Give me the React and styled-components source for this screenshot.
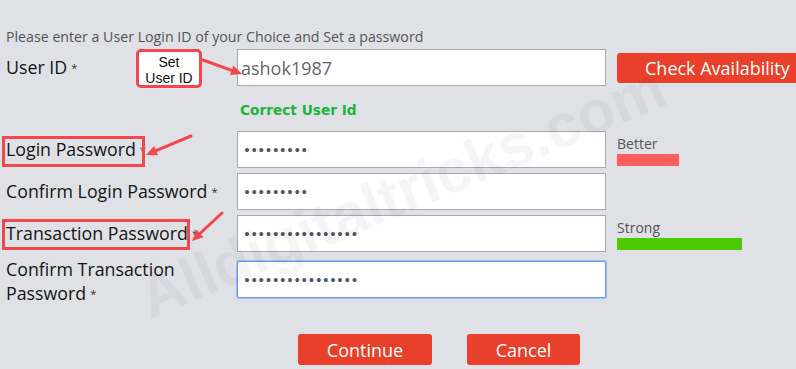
import React from "react";
import styled, { createGlobalStyle } from "styled-components";

const Global = createGlobalStyle`
  html, body { margin: 0; padding: 0; background: #dfe1e6; }
  body { font-family: "Open Sans", "Noto Sans", sans-serif; overflow: hidden; }
`;

const Page = styled.div`
  position: relative;
  width: 796px;
  height: 369px;
  overflow: hidden;
  background: #dfe1e6;
  color: #111;
`;

const Form = styled.div`
  padding: 28px 0 0 6px;
  display: flex;
  flex-direction: column;
`;

const Intro = styled.div`
  font-size: 14.2px;
  line-height: 18px;
  color: #555;
  margin-bottom: 3px;
  white-space: nowrap;
`;

const Row = styled.div`
  display: grid;
  grid-template-columns: 231px 369px 1fr;
  grid-template-rows: 37px;
  align-items: center;
  height: 37px;
  margin-top: ${(p) => p.$gap || 0}px;
`;

const Label = styled.div`
  font-size: 17.8px;
  line-height: 24px;
  color: #151515;
  white-space: nowrap;
  padding-top: ${(p) => (p.$two ? 3 : 0)}px;
`;

const Star = styled.span`
  font-size: 11px;
  color: #333;
  margin-left: 4px;
  vertical-align: 2px;
`;

const Field = styled.input`
  box-sizing: border-box;
  width: 369px;
  height: 37px;
  margin: 0;
  padding: 0 3px;
  background: #fff;
  border: 1px solid ${(p) => (p.$focus ? "#6f9ae6" : "#a9a9a9")};
  box-shadow: ${(p) => (p.$focus ? "0 0 0 1px #9bbcf0" : "none")};
  border-radius: ${(p) => (p.$focus ? "2px" : "0")};
  outline: none;
  font-family: "Open Sans", sans-serif;
  font-size: 18px;
  color: #666;
  &[type="password"] {
    font-family: "DejaVu Sans", sans-serif;
    font-size: 13.5px;
    letter-spacing: -0.8px;
    color: #505560;
    padding-left: 5px;
  }
`;

const Side = styled.div`
  align-self: ${(p) => (p.$top ? "start" : "center")};
  padding-left: 11px;
  padding-top: ${(p) => (p.$top ? 5 : 0)}px;
  display: flex;
  flex-direction: column;
  align-items: flex-start;
`;

const Strength = styled.div`
  font-size: 14px;
  line-height: 16px;
  color: #555;
`;

const Bar = styled.div`
  height: 12px;
  margin-top: 2px;
  width: ${(p) => p.$w}px;
  background: ${(p) => p.$color};
`;

const RedButton = styled.button`
  box-sizing: border-box;
  height: ${(p) => p.$h || 31}px;
  width: ${(p) => p.$w}px;
  padding: ${(p) => (p.$left ? "0 0 0 28px" : "0")};
  text-align: ${(p) => (p.$left ? "left" : "center")};
  background: #e8402b;
  color: #fff;
  border: none;
  border-radius: 3px;
  font-family: "Open Sans", sans-serif;
  font-size: 18px;
  white-space: nowrap;
  flex: none;
`;

const MessageRow = styled.div`
  display: grid;
  grid-template-columns: 231px 1fr;
  height: 45px;
`;

const Valid = styled.div`
  grid-column: 2;
  padding: 15px 0 0 3px;
  font-family: "DejaVu Sans", sans-serif;
  font-size: 13.7px;
  line-height: 18px;
  font-weight: 700;
  color: #1cb53a;
`;

const Buttons = styled.div`
  display: flex;
  gap: 35px;
  margin-top: 36px;
  padding-left: 292px;
`;

const SetBox = styled.div`
  position: absolute;
  left: 136px;
  top: 49px;
  width: 66px;
  height: 39px;
  box-sizing: border-box;
  border: 3px solid #f2474c;
  border-radius: 5px;
  background: #fff;
  font-family: "Liberation Sans", Arial, sans-serif;
  font-size: 14px;
  line-height: 16px;
  color: #111;
  text-align: center;
  padding-top: 2px;
`;

const Highlight = styled.div`
  position: absolute;
  left: ${(p) => p.$x}px;
  top: ${(p) => p.$y}px;
  width: ${(p) => p.$w}px;
  height: 31px;
  box-sizing: border-box;
  border: 3px solid #f2474c;
  pointer-events: none;
`;

const Arrows = styled.svg`
  position: absolute;
  left: 0;
  top: 0;
  pointer-events: none;
`;

const Watermark = styled.div`
  position: absolute;
  left: 402px;
  top: 192px;
  transform: translate(-50%, -50%) rotate(-22.5deg);
  font-family: "Liberation Sans", Arial, sans-serif;
  font-weight: 700;
  font-size: 61px;
  color: rgba(0, 0, 0, 0.04);
  white-space: nowrap;
  pointer-events: none;
`;

const Arrow = ({ x1, y1, bx, by, head }) => (
  <g>
    <line x1={x1} y1={y1} x2={bx} y2={by} stroke="#f2474c" strokeWidth="3" strokeLinecap="round" />
    <polygon points={head} fill="#f2474c" />
  </g>
);

export default function App() {
  return (
    <Page>
      <Global />
      <Form>
        <Intro>Please enter a User Login ID of your Choice and Set a password</Intro>
        <Row>
          <Label>
            User ID<Star>*</Star>
          </Label>
          <Field type="text" defaultValue="ashok1987" readOnly />
          <Side>
            <RedButton $w={190} $h={30} $left>
              Check Availability
            </RedButton>
          </Side>
        </Row>
        <MessageRow>
          <Valid>Correct User Id</Valid>
        </MessageRow>
        <Row>
          <Label>
            Login Password<Star>*</Star>
          </Label>
          <Field type="password" defaultValue="123456789" readOnly />
          <Side $top>
            <Strength>Better</Strength>
            <Bar $w={62} $color="#ff5e5e" />
          </Side>
        </Row>
        <Row $gap={5}>
          <Label>
            Confirm Login Password<Star>*</Star>
          </Label>
          <Field type="password" defaultValue="123456789" readOnly />
          <Side />
        </Row>
        <Row $gap={5}>
          <Label>
            Transaction Password<Star>*</Star>
          </Label>
          <Field type="password" defaultValue="1234567890123456" readOnly />
          <Side $top>
            <Strength>Strong</Strength>
            <Bar $w={125} $color="#4ccb00" />
          </Side>
        </Row>
        <Row $gap={9}>
          <Label $two>
            Confirm Transaction
            <br />
            Password<Star>*</Star>
          </Label>
          <Field type="password" defaultValue="1234567890123456" readOnly $focus />
          <Side />
        </Row>
        <Buttons>
          <RedButton $w={134}>Continue</RedButton>
          <RedButton $w={113}>Cancel</RedButton>
        </Buttons>
      </Form>

      <Watermark>Alldigitaltricks.com</Watermark>

      <SetBox>
        Set
        <br />
        User ID
      </SetBox>
      <Highlight $x={2} $y={136} $w={143} />
      <Highlight $x={2} $y={219} $w={188} />
      <Arrows width="796" height="369" viewBox="0 0 796 369">
        <Arrow x1={203} y1={60} bx={231.7} by={70.3} head="242,74 230,75 233.4,65.6" />
        <Arrow x1={191} y1={136} bx={156.1} by={150.7} head="146,155 154.2,146.1 158,155.3" />
        <Arrow x1={222} y1={213} bx={200} by={233.5} head="192,241 196.6,229.8 203.4,237.2" />
      </Arrows>
    </Page>
  );
}
